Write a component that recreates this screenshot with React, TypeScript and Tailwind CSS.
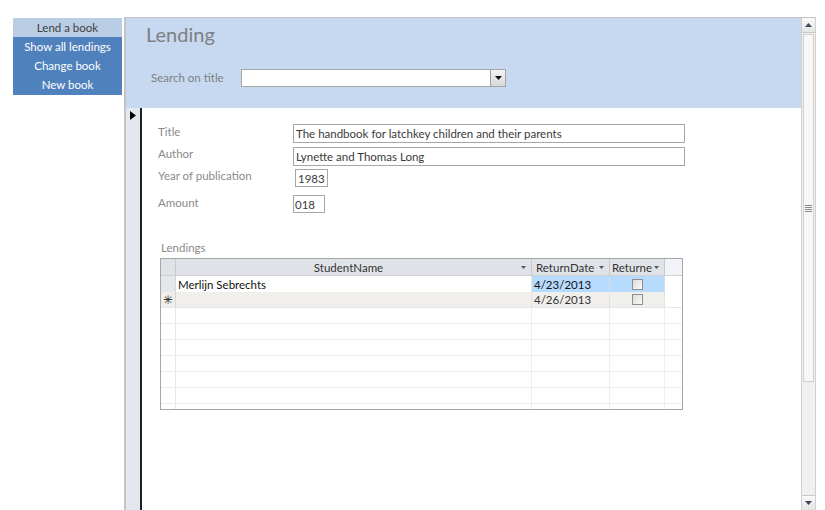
import React from "react";

const F = "font-['Lato',sans-serif]";

function Checkbox() {
  return (
    <div className="w-[11px] h-[11px] border border-[#8f8f8f] bg-gradient-to-br from-[#dcdcdc] to-[#fafafa]" />
  );
}

function DropArrow() {
  return (
    <svg width="5" height="3" viewBox="0 0 5 3" className="ml-auto mr-[5px]">
      <path d="M0 0H5L2.5 3Z" fill="#555" />
    </svg>
  );
}

function EmptyRow() {
  return (
    <div className="flex h-[16px] border-b border-[#eeeeee] shrink-0">
      <div className="w-[15px] border-r border-[#e6e6e6]" />
      <div className="w-[356px] border-r border-[#eeeeee]" />
      <div className="w-[78px] border-r border-[#eeeeee]" />
      <div className="w-[55px] border-r border-[#eeeeee]" />
      <div className="flex-1" />
    </div>
  );
}

export default function App() {
  return (
    <div className={`w-[825px] h-[510px] bg-white flex overflow-hidden ${F}`}>
      {/* Left nav */}
      <div className="ml-[13px] mt-[18px] w-[109px] flex flex-col self-start text-[11.5px] leading-[14px]">
        <div className="h-[19px] bg-[#b9cde5] text-[#3f3f3f] flex items-center justify-center">Lend a book</div>
        <div className="h-[19px] bg-[#4f81bd] text-white flex items-center justify-center">Show all lendings</div>
        <div className="h-[19px] bg-[#4f81bd] text-white flex items-center justify-center">Change book</div>
        <div className="h-[20px] bg-[#4f81bd] text-white flex items-center justify-center">New book</div>
      </div>

      {/* Form */}
      <div className="ml-[2px] mt-[17px] w-[692px] h-[493px] border-l-2 border-t border-[#c4c4c4] flex">
        <div className="flex-1 flex flex-col">
          {/* Header */}
          <div className="h-[90px] bg-[#c6d9f1] flex flex-col pl-[20px] shrink-0">
            <div className="mt-[4px] text-[20px] text-[#7f7f7f] leading-[24px]">Lending</div>
            <div className="mt-[23px] flex items-center">
              <div className="ml-[5px] w-[90px] text-[11.5px] text-[#7f7f7f]">Search on title</div>
              <div className="w-[265px] h-[18px] bg-white border border-[#a6a6a6] flex justify-end">
                <div className="w-[15px] h-full border-l border-[#a0a0a0] bg-gradient-to-b from-[#f4f4f4] to-[#d8d8d8] flex items-center justify-center">
                  <svg width="7" height="4" viewBox="0 0 7 4">
                    <path d="M0 0H7L3.5 4Z" fill="#111" />
                  </svg>
                </div>
              </div>
            </div>
          </div>

          {/* Body */}
          <div className="flex-1 flex">
            <div className="w-[16px] bg-[#e3e8ef] border-r-2 border-[#202020] flex justify-center pt-[3px]">
              <svg width="6" height="9" viewBox="0 0 6 9">
                <path d="M0 0L6 4.5L0 9Z" fill="#000" />
              </svg>
            </div>
            <div className="flex-1 flex flex-col pl-[16px] text-[11.5px] leading-[15px]">
              <div className="mt-[16px] flex items-start">
                <div className="w-[135px] text-[#8a8a8a]">Title</div>
                <div className="w-[392px] h-[19px] border border-[#a6a6a6] text-[#3a3a3a] pl-[2px] flex items-center">The handbook for latchkey children and their parents</div>
              </div>
              <div className="mt-[4px] flex items-start">
                <div className="w-[135px] text-[#8a8a8a] -mt-[1px]">Author</div>
                <div className="w-[392px] h-[19px] border border-[#a6a6a6] text-[#3a3a3a] pl-[2px] flex items-center">Lynette and Thomas Long</div>
              </div>
              <div className="mt-[3px] flex items-start">
                <div className="w-[137px] text-[#8a8a8a] -mt-[1px]">Year of publication</div>
                <div className="w-[33px] h-[18px] border border-[#a6a6a6] text-[#3a3a3a] pl-[2px] flex items-center">1983</div>
              </div>
              <div className="mt-[8px] flex items-center">
                <div className="w-[135px] text-[#8a8a8a] -mt-[3px]">Amount</div>
                <div className="w-[32px] h-[18px] border border-[#a6a6a6] text-[#3a3a3a] pl-[1px] flex items-center">018</div>
              </div>
              <div className="mt-[27px] ml-[3px] text-[#8a8a8a]">Lendings</div>

              {/* Grid */}
              <div className="mt-[3px] ml-[2px] w-[523px] h-[152px] border border-[#a6a6a6] flex flex-col overflow-hidden">
                <div className="flex h-[17px] shrink-0 border-b border-[#d0d0d0]">
                  <div className="w-[15px] bg-[#dfe3e8] border-r border-[#c8c8c8]" />
                  <div className="w-[356px] bg-[#dfe3e8] border-r border-[#c8c8c8] flex items-center relative text-[#333]">
                    <span className="absolute left-0 right-[10px] text-center">StudentName</span>
                    <DropArrow />
                  </div>
                  <div className="w-[78px] bg-[#dfe3e8] border-r border-[#c8c8c8] flex items-center pl-[4px] text-[#333]">
                    ReturnDate
                    <DropArrow />
                  </div>
                  <div className="w-[55px] bg-[#dfe3e8] border-r border-[#c8c8c8] flex items-center pl-[2px] text-[#333]">
                    Returne
                    <DropArrow />
                  </div>
                  <div className="flex-1 bg-[#f2f4fa]" />
                </div>
                <div className="flex h-[16px] shrink-0">
                  <div className="w-[15px] bg-[#e4e7eb] border-r border-[#d6d6d6]" />
                  <div className="w-[356px] bg-white border-r border-[#e6e6e6] pl-[2px] flex items-center text-[#111]">Merlijn Sebrechts</div>
                  <div className="w-[78px] bg-[#b7dbff] border-r border-[#dcdcdc] pl-[2px] flex items-center text-[#111]">4/23/2013</div>
                  <div className="w-[55px] bg-[#b7dbff] border-r border-[#dcdcdc] flex items-center justify-center"><Checkbox /></div>
                  <div className="flex-1 bg-white" />
                </div>
                <div className="flex h-[16px] shrink-0 border-b border-[#e6e6e6]">
                  <div className="w-[15px] bg-[#f0efec] border-r border-[#d6d6d6] flex items-center justify-center text-[12px] text-[#222] leading-none">✳</div>
                  <div className="w-[356px] bg-[#f0efec] border-r border-[#e2e2e2]" />
                  <div className="w-[78px] bg-[#f0efec] border-r border-[#e2e2e2] pl-[2px] flex items-center text-[#333]">4/26/2013</div>
                  <div className="w-[55px] bg-[#f0efec] border-r border-[#e2e2e2] flex items-center justify-center"><Checkbox /></div>
                  <div className="flex-1 bg-white" />
                </div>
                <EmptyRow />
                <EmptyRow />
                <EmptyRow />
                <EmptyRow />
                <EmptyRow />
                <EmptyRow />
                <EmptyRow />
              </div>
            </div>
          </div>
        </div>

        {/* Scrollbar */}
        <div className="w-[15px] flex flex-col bg-[#f0f0f0] border-l border-[#d0d0d0] border-r border-[#c8c8c8]">
          <div className="h-[15px] shrink-0 bg-gradient-to-b from-[#fafafa] to-[#e4e4e4] border-b border-[#c8c8c8] flex items-center justify-center">
            <svg width="7" height="4" viewBox="0 0 7 4">
              <path d="M0 4H7L3.5 0Z" fill="#40475a" />
            </svg>
          </div>
          <div className="h-[348px] mx-[1px] mt-[1px] bg-[#f7f7f7] border border-[#cfcfcf] flex items-center justify-center">
            <div className="flex flex-col gap-[1px]">
              <div className="w-[7px] h-[1px] bg-[#8a8a8a]" />
              <div className="w-[7px] h-[1px] bg-[#8a8a8a]" />
              <div className="w-[7px] h-[1px] bg-[#8a8a8a]" />
              <div className="w-[7px] h-[1px] bg-[#8a8a8a]" />
            </div>
          </div>
          <div className="flex-1" />
          <div className="h-[15px] shrink-0 bg-gradient-to-b from-[#fafafa] to-[#e4e4e4] border-t border-[#c8c8c8] flex items-center justify-center">
            <svg width="7" height="4" viewBox="0 0 7 4">
              <path d="M0 0H7L3.5 4Z" fill="#40475a" />
            </svg>
          </div>
        </div>
      </div>
    </div>
  );
}
